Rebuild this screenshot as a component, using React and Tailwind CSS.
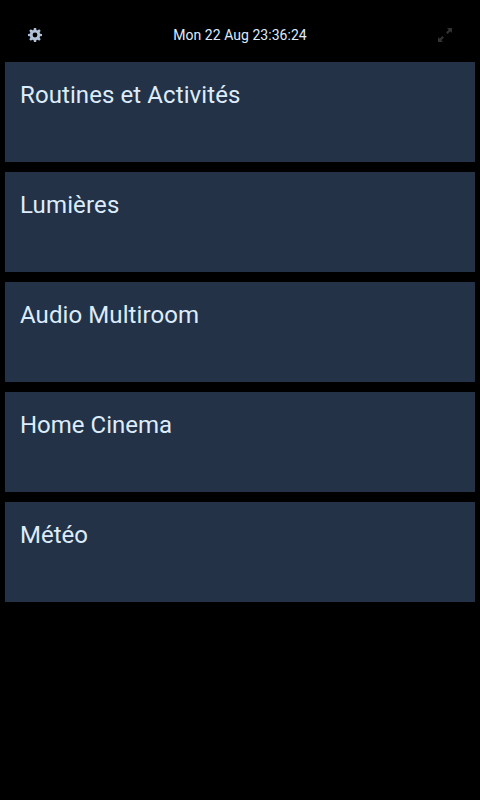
const rooms = [
  { name: "Routines et Activités", tracking: "tracking-[0.09px]" },
  { name: "Lumières", tracking: "tracking-[0.15px]" },
  { name: "Audio Multiroom", tracking: "tracking-[0.09px]" },
  { name: "Home Cinema", tracking: "tracking-normal" },
  { name: "Météo", tracking: "tracking-normal" },
];

const teeth = [0, 45, 90, 135, 180, 225, 270, 315];

function Gear() {
  return (
    <svg className="size-[14px]" viewBox="0 0 14 14" fill="#b0c2d8" aria-label="Settings">
      {teeth.map((angle) => (
        <path key={angle} d="M5.4 3L5.9 0h2.2l.5 3z" transform={`rotate(${angle} 7 7)`} />
      ))}
      <circle cx="7" cy="7" r="3.8" fill="none" stroke="#b0c2d8" strokeWidth="2.8" />
    </svg>
  );
}

function Expand() {
  return (
    <svg className="size-[14px]" viewBox="0 0 14 14" fill="#333" aria-label="Fullscreen">
      <path d="M9 0h5v5l-1.7-1.7-2.7 2.7L8 4.4l2.7-2.7z" />
      <path d="M5 14H0V9l1.7 1.7 2.7-2.7L6 9.6l-2.7 2.7z" />
    </svg>
  );
}

export default function App() {
  return (
    <div className="h-[800px] w-[480px] overflow-hidden bg-black font-['Roboto',sans-serif] text-[#dcecff]">
      <header className="flex h-[62px] items-center justify-between px-[28px] pt-[8px]">
        <Gear />
        <time className="text-[14px] leading-[20px] tracking-[0.04px]">Mon 22 Aug 23:36:24</time>
        <Expand />
      </header>
      <main className="flex flex-col gap-[10px] px-[5px]">
        {rooms.map(({ name, tracking }) => (
          <section key={name} className="h-[100px] bg-[#233246] px-[15px] pt-[15px]">
            <h2 className={`text-[24px] leading-[36px] ${tracking}`}>{name}</h2>
          </section>
        ))}
      </main>
    </div>
  );
}
